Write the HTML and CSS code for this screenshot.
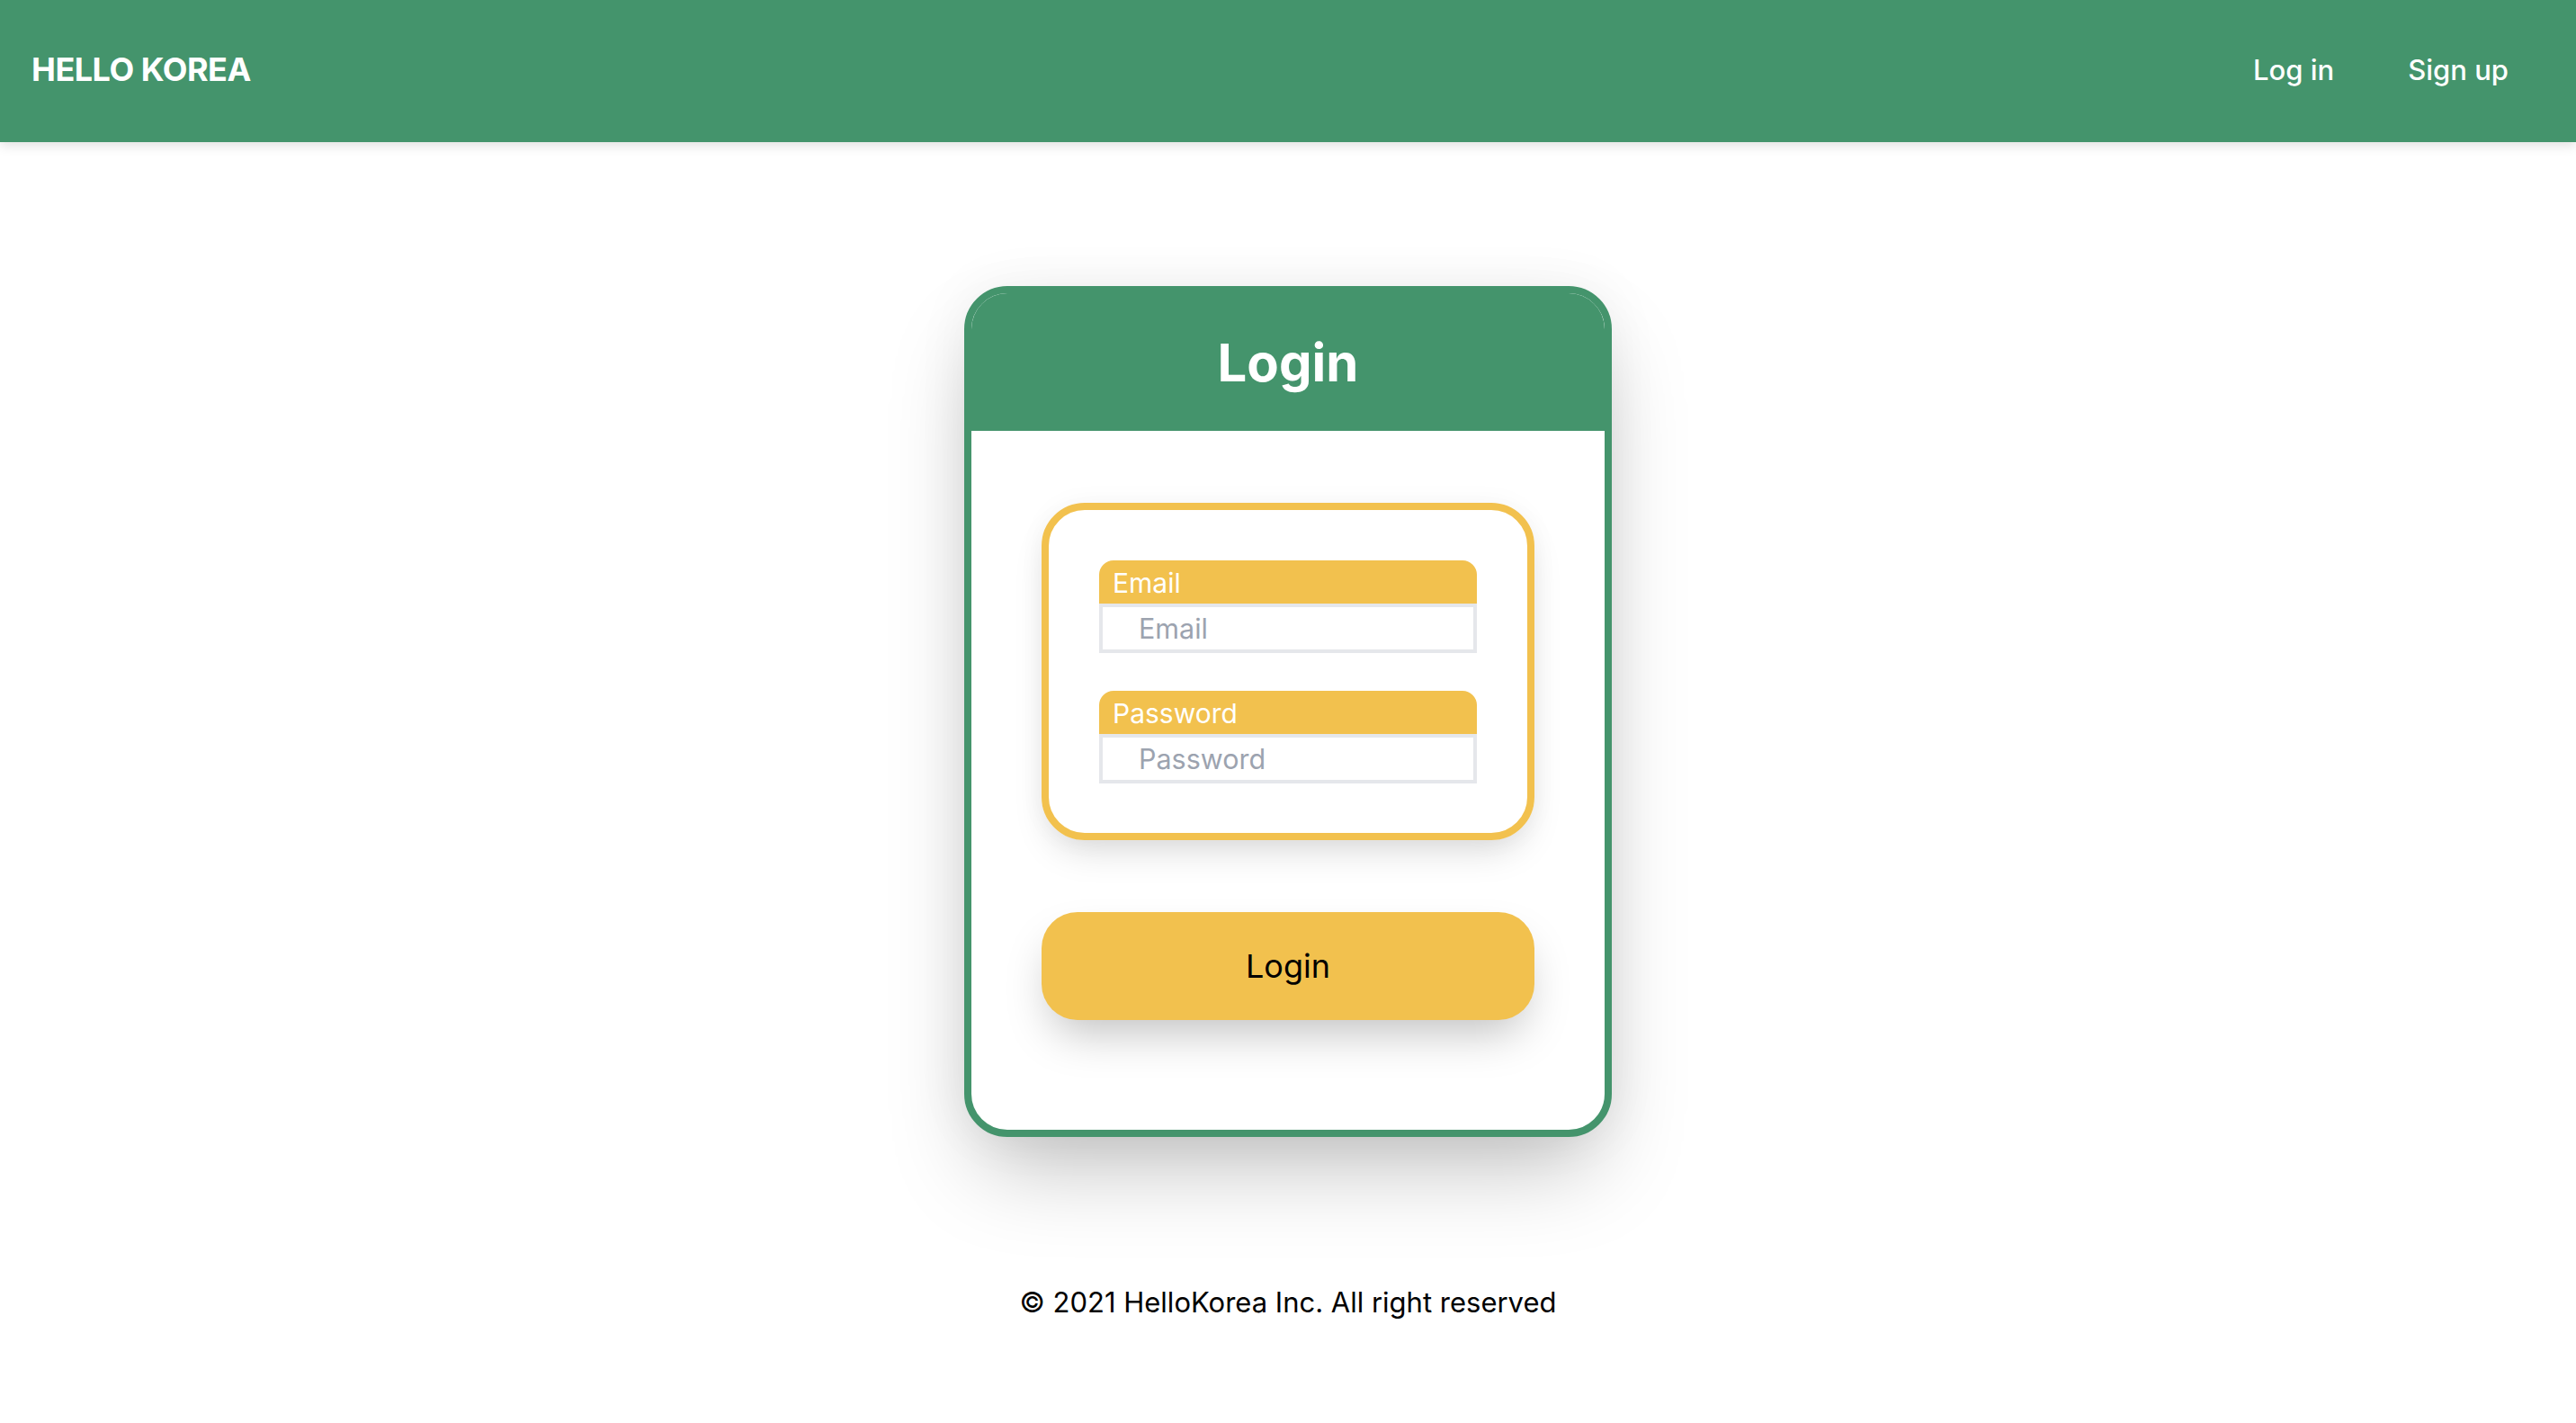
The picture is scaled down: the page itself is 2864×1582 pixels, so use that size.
FILE: index.html
```html
<!DOCTYPE html>
<html lang="en">
<head>
<meta charset="utf-8">
<title>Hello Korea - Login</title>
<link rel="stylesheet" href="styles.css">
</head>
<body>
<header class="topbar">
  <div class="brand">HELLO KOREA</div>
  <nav class="nav">
    <a class="nav-link" href="#">Log in</a>
    <a class="nav-link" href="#">Sign up</a>
  </nav>
</header>
<main class="main">
  <section class="card">
    <div class="card-head"><h1 class="card-title">Login</h1></div>
    <div class="card-body">
      <form class="fields">
        <div class="field">
          <label class="field-label" for="email">Email</label>
          <input class="field-input" id="email" type="email" placeholder="Email">
        </div>
        <div class="field">
          <label class="field-label" for="pw">Password</label>
          <input class="field-input" id="pw" type="password" placeholder="Password">
        </div>
      </form>
      <button class="login-btn" type="button">Login</button>
    </div>
  </section>
  <footer class="footer">© 2021 HelloKorea Inc. All right reserved</footer>
</main>
</body>
</html>
```
FILE: styles.css
```css
* { box-sizing: border-box; }
html, body { margin: 0; padding: 0; }
body {
  font-family: Inter, "Noto Sans", "Liberation Sans", sans-serif;
  background: #ffffff;
  color: #000;
}
.topbar {
  height: 158px;
  background: #44946c;
  display: flex;
  align-items: center;
  justify-content: space-between;
  padding: 0 75px 4px 35px;
  box-shadow: 0 4px 12px rgba(0,0,0,0.12);
}
.brand {
  color: #fff;
  font-weight: 700;
  font-size: 36px;
  letter-spacing: -0.5px;
}
.nav { display: flex; gap: 82px; }
.nav-link {
  color: #fff;
  text-decoration: none;
  font-size: 31px;
  font-weight: 500;
}
.main {
  display: flex;
  flex-direction: column;
  align-items: center;
  padding-top: 160px;
}
.card {
  width: 720px;
  border: 8px solid #44946c;
  border-radius: 48px;
  overflow: hidden;
  background: #fff;
  box-shadow: 0 50px 100px -20px rgba(0,0,0,0.25), 0 0 60px rgba(0,0,0,0.06);
}
.card-head {
  background: #44946c;
  height: 153px;
  display: flex;
  align-items: center;
  justify-content: center;
}
.card-title {
  margin: 0;
  color: #fff;
  font-size: 58px;
  font-weight: 700;
}
.card-body {
  padding: 80px 78px 122px;
  display: flex;
  flex-direction: column;
  gap: 80px;
}
.fields {
  border: 8px solid #f2c14e;
  border-radius: 48px;
  padding: 56px 56px 55px;
  display: flex;
  flex-direction: column;
  gap: 42px;
  box-shadow: 0 20px 40px -10px rgba(0,0,0,0.15), 0 0 30px rgba(0,0,0,0.04);
  margin: 0;
}
.field { display: flex; flex-direction: column; }
.field-label {
  background: #f2c14e;
  color: #fff;
  font-size: 30px;
  height: 48px;
  line-height: 50px;
  padding: 0 15px;
  border-radius: 16px 16px 0 0;
}
.field-input {
  height: 55px;
  border: 4px solid #e5e7eb;
  font-family: inherit;
  font-size: 30.5px;
  padding: 0 40px;
  color: #111;
  outline: none;
}
.field-input::placeholder { color: #9ca3af; }
.login-btn {
  height: 120px;
  border: none;
  border-radius: 40px;
  background: #f2c14e;
  font-family: inherit;
  font-size: 36px;
  color: #000;
  box-shadow: 0 25px 50px -12px rgba(0,0,0,0.25);
  cursor: pointer;
}
.footer {
  margin-top: 165px;
  font-size: 31px;
  color: #000;
}
```
